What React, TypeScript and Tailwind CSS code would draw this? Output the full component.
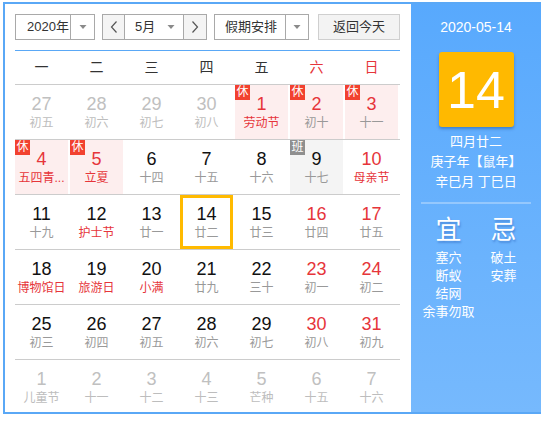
import React from "react";

type Day = {
  n: number;
  l: string;
  other?: boolean;
  red?: boolean;
  fest?: boolean;
  badge?: "休" | "班";
  today?: boolean;
};

const rows: Day[][] = [
  [
    { n: 27, l: "初五", other: true },
    { n: 28, l: "初六", other: true },
    { n: 29, l: "初七", other: true },
    { n: 30, l: "初八", other: true },
    { n: 1, l: "劳动节", red: true, fest: true, badge: "休" },
    { n: 2, l: "初十", red: true, badge: "休" },
    { n: 3, l: "十一", red: true, badge: "休" },
  ],
  [
    { n: 4, l: "五四青...", red: true, fest: true, badge: "休" },
    { n: 5, l: "立夏", red: true, fest: true, badge: "休" },
    { n: 6, l: "十四" },
    { n: 7, l: "十五" },
    { n: 8, l: "十六" },
    { n: 9, l: "十七", badge: "班" },
    { n: 10, l: "母亲节", red: true, fest: true },
  ],
  [
    { n: 11, l: "十九" },
    { n: 12, l: "护士节", fest: true },
    { n: 13, l: "廿一" },
    { n: 14, l: "廿二", today: true },
    { n: 15, l: "廿三" },
    { n: 16, l: "廿四", red: true },
    { n: 17, l: "廿五", red: true },
  ],
  [
    { n: 18, l: "博物馆日", fest: true },
    { n: 19, l: "旅游日", fest: true },
    { n: 20, l: "小满", fest: true },
    { n: 21, l: "廿九" },
    { n: 22, l: "三十" },
    { n: 23, l: "初一", red: true },
    { n: 24, l: "初二", red: true },
  ],
  [
    { n: 25, l: "初三" },
    { n: 26, l: "初四" },
    { n: 27, l: "初五" },
    { n: 28, l: "初六" },
    { n: 29, l: "初七" },
    { n: 30, l: "初八", red: true },
    { n: 31, l: "初九", red: true },
  ],
  [
    { n: 1, l: "儿童节", other: true },
    { n: 2, l: "十一", other: true },
    { n: 3, l: "十二", other: true },
    { n: 4, l: "十三", other: true },
    { n: 5, l: "芒种", other: true },
    { n: 6, l: "十五", other: true },
    { n: 7, l: "十六", other: true },
  ],
];

function Caret() {
  return (
    <svg width="8" height="5" viewBox="0 0 8 5">
      <path d="M0.5 0 L7.5 0 L4 4 Z" fill="#8a8a8a" />
    </svg>
  );
}

function Chevron({ dir }: { dir: "l" | "r" }) {
  return (
    <svg width="8" height="12" viewBox="0 0 8 12">
      <path
        d={dir === "l" ? "M6.5 0.5 L1.5 6 L6.5 11.5" : "M1.5 0.5 L6.5 6 L1.5 11.5"}
        fill="none"
        stroke="#555"
        strokeWidth="1.2"
      />
    </svg>
  );
}

function Cell({ d }: { d: Day }) {
  const bg = d.badge === "休" ? "bg-[#fdeeee]" : d.badge === "班" ? "bg-[#f4f4f4]" : "";
  const numColor = d.other ? "text-[#c0c0c0]" : d.red ? "text-[#e6353a]" : "text-[#111]";
  const lunColor = d.other ? "text-[#bdbdbd]" : d.fest ? "text-[#e6353a]" : "text-[#999]";
  return (
    <div
      className={`relative w-[53px] h-[54px] flex flex-col items-center pt-[9px] ${bg} ${
        d.today ? "shadow-[inset_0_0_0_3px_#ffba00]" : ""
      }`}
    >
      {d.badge && (
        <span
          className={`absolute top-0 left-0 w-[15px] h-[15px] text-[12px] leading-[15px] text-center text-white ${
            d.badge === "休" ? "bg-[#f2412f]" : "bg-[#8f8f8f]"
          }`}
        >
          {d.badge}
        </span>
      )}
      <span className={`text-[18px] leading-[20px] ${numColor}`}>{d.n}</span>
      <span className={`mt-[1px] text-[12px] leading-[16px] whitespace-nowrap ${lunColor}`}>
        {d.l}
      </span>
    </div>
  );
}

export default function App() {
  const weekdays = ["一", "二", "三", "四", "五", "六", "日"];
  return (
    <div className="pl-[3px] pt-[2px] bg-white font-['Liberation_Sans','Noto_Sans_CJK_SC',sans-serif]">
      <div className="flex w-[538px] h-[412px] border-l-2 border-t-2 border-b-2 border-[#5aa8f6] bg-white overflow-hidden">
        {/* left */}
        <div className="w-[406px] pl-[10px] pr-[11px] pt-[10px] overflow-hidden">
          {/* toolbar */}
          <div className="flex h-[26px] text-[13px] text-[#333]">
            <div className="w-[80px] flex border border-[#a9a9a9]">
              <span className="flex-1 pl-[11px] leading-[24px]">2020年</span>
              <span className="w-[24px] border-l border-[#a9a9a9] flex items-center justify-center">
                <Caret />
              </span>
            </div>
            <div className="ml-[7px] w-[105px] flex border border-[#a9a9a9]">
              <span className="w-[22px] bg-[#f4f4f4] border-r border-[#a9a9a9] flex items-center justify-center">
                <Chevron dir="l" />
              </span>
              <span className="flex-1 flex items-center justify-between pl-[10px] pr-[8px] leading-[24px]">
                <span>5月</span>
                <Caret />
              </span>
              <span className="w-[23px] bg-[#f4f4f4] border-l border-[#a9a9a9] flex items-center justify-center">
                <Chevron dir="r" />
              </span>
            </div>
            <div className="ml-[7px] w-[95px] flex border border-[#a9a9a9]">
              <span className="flex-1 pl-[10px] leading-[24px]">假期安排</span>
              <span className="w-[23px] border-l border-[#a9a9a9] flex items-center justify-center">
                <Caret />
              </span>
            </div>
            <div className="ml-[9px] flex-1 border border-[#cfcfcf] bg-[#f3f3f3] flex items-center justify-center leading-[24px]">
              返回今天
            </div>
          </div>
          {/* blue line */}
          <div className="mt-[10px] h-[1px] bg-[#5aa8f6]" />
          {/* weekday header */}
          <div className="grid grid-cols-[repeat(7,55px)] h-[33px]">
            {weekdays.map((w, i) => (
              <div
                key={w}
                className={`w-[53px] text-center text-[14px] leading-[33px] ${
                  i >= 5 ? "text-[#e6353a]" : "text-[#333]"
                }`}
              >
                {w}
              </div>
            ))}
          </div>
          {/* rows */}
          {rows.map((r, ri) => (
            <div
              key={ri}
              className="h-[55px] border-t border-[#cccccc] grid grid-cols-[repeat(7,55px)]"
            >
              {r.map((d, di) => (
                <Cell key={di} d={d} />
              ))}
            </div>
          ))}
        </div>
        {/* right panel */}
        <div className="w-[130px] bg-linear-to-b from-[#58a9fd] to-[#76b9fd] flex flex-col items-center text-white">
          <div className="pt-[13px] text-[14px] leading-[20px]">2020-05-14</div>
          <div className="mt-[15px] w-[75px] h-[75px] rounded-[3px] bg-[#ffb900] shadow-[0_2px_3px_rgba(0,50,120,0.35)] flex items-center justify-center text-[52px] leading-none">
            14
          </div>
          <div className="mt-[5px] flex flex-col items-center text-[13px] leading-[20px]">
            <span>四月廿二</span>
            <span>庚子年【鼠年】</span>
            <span>辛巳月 丁巳日</span>
          </div>
          <div className="mt-[10px] w-[110px] h-[2px] bg-white/30" />
          <div className="mt-[11px] w-[110px] grid grid-cols-2">
            <div className="flex flex-col items-center">
              <span className="text-[26px] leading-[30px] [text-shadow:1px_2px_2px_rgba(20,70,160,0.35)]">
                宜
              </span>
              <div className="mt-[4px] flex flex-col items-center text-[13px] leading-[18px] whitespace-nowrap">
                <span>塞穴</span>
                <span>断蚁</span>
                <span>结网</span>
                <span>余事勿取</span>
              </div>
            </div>
            <div className="flex flex-col items-center">
              <span className="text-[26px] leading-[30px] [text-shadow:1px_2px_2px_rgba(20,70,160,0.35)]">
                忌
              </span>
              <div className="mt-[4px] flex flex-col items-center text-[13px] leading-[18px] whitespace-nowrap">
                <span>破土</span>
                <span>安葬</span>
              </div>
            </div>
          </div>
        </div>
      </div>
    </div>
  );
}
